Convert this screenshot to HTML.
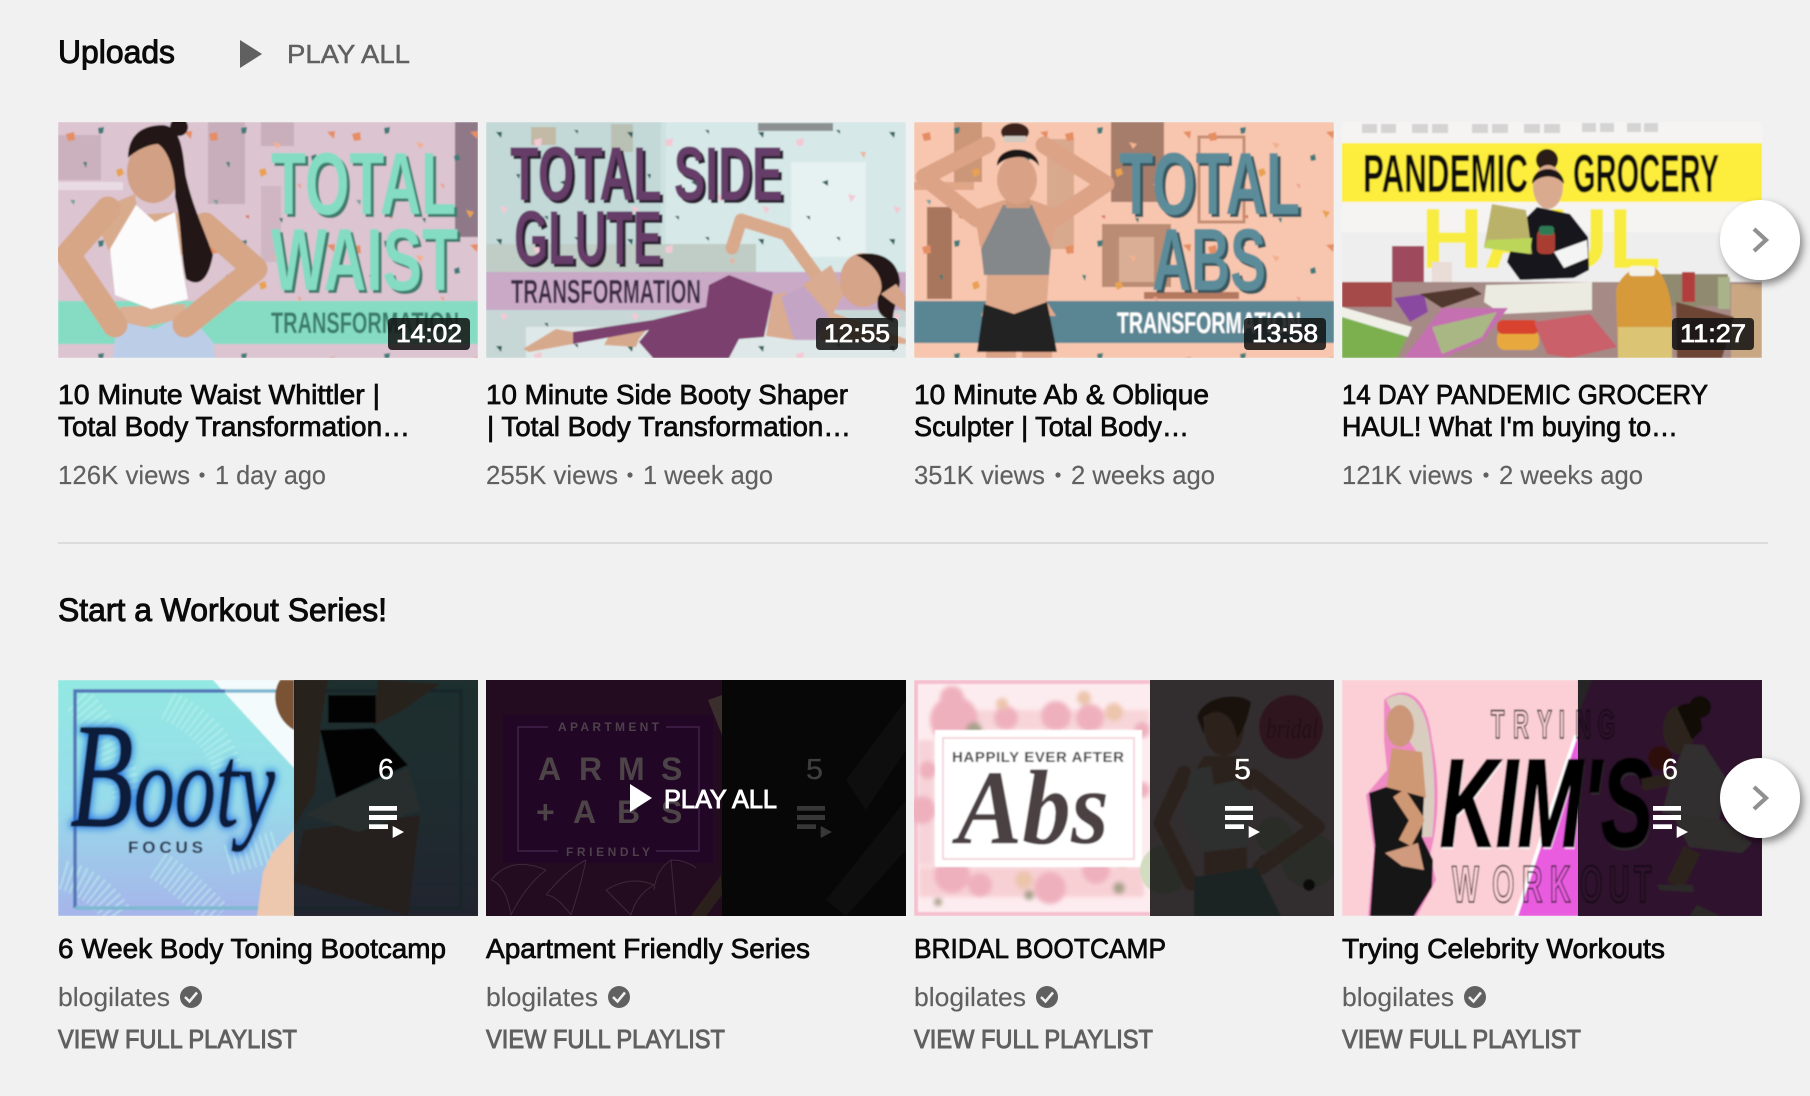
<!DOCTYPE html>
<html><head><meta charset="utf-8"><title>Uploads</title>
<style>
html,body{margin:0;padding:0;background:#f1f1f1;width:1810px;height:1096px;overflow:hidden}
svg{display:block}
text{font-family:"Liberation Sans",sans-serif}
.h{font-size:32px;fill:#0a0a0a;stroke:#0a0a0a;stroke-width:.95px}
.t{font-size:28px;fill:#0a0a0a;stroke:#0a0a0a;stroke-width:.75px}
.m{font-size:26px;fill:#606060;stroke:#606060;stroke-width:.15px}
.p{font-size:26px;fill:#606060;stroke:#606060;stroke-width:.45px}
.v{font-size:26px;fill:#606060;stroke:#606060;stroke-width:.95px}
.d{font-size:25px;fill:#fff;stroke:#fff;stroke-width:.75px}
.c{font-size:29px;fill:#fff;stroke:#fff;stroke-width:.3px}
.b{font-weight:bold}
</style></head><body>
<svg xmlns="http://www.w3.org/2000/svg" width="1810" height="1096" viewBox="0 0 1810 1096">
<defs>
<filter id="soft" x="-5%" y="-5%" width="110%" height="110%"><feGaussianBlur stdDeviation="0.8"/></filter>
<filter id="soft2" x="-10%" y="-10%" width="120%" height="120%"><feGaussianBlur stdDeviation="2.2"/></filter>
<filter id="glow" x="-20%" y="-20%" width="140%" height="140%"><feGaussianBlur stdDeviation="4"/></filter>
<filter id="sh" x="-30%" y="-30%" width="170%" height="170%"><feDropShadow dx="3" dy="4" stdDeviation="4" flood-color="#000" flood-opacity=".45"/></filter>
<pattern id="conf" width="143" height="113" patternUnits="userSpaceOnUse">
<path d="M8 12 L16 10 L17 18 L10 19Z" fill="#e58d63"/>
<path d="M40 6 L46 5 L45 11 L41 12Z" fill="#3f7a78"/>
<path d="M72 20 L80 22 L76 27Z" fill="#f2b090"/>
<path d="M25 40 L29 40 L28 46Z" fill="#3f7a78"/>
<path d="M58 48 L64 46 L66 52 L60 55Z" fill="#e8a24f"/>
<path d="M110 34 L115 32 L116 38 L111 39Z" fill="#3f7a78"/>
<path d="M126 10 L134 9 L133 17Z" fill="#e58d63"/>
<path d="M96 62 L100 62 L100 67Z" fill="#ef9f8e"/>
<path d="M12 78 L17 78 L16 83Z" fill="#6f9ea0"/>
<path d="M44 94 L48 93 L48 97Z" fill="#d76f4e"/>
<path d="M122 88 L130 90 L126 96Z" fill="#e8a24f"/>
<path d="M78 96 L82 96 L81 101Z" fill="#3f7a78"/>
</pattern>
<pattern id="conf2" width="131" height="107" patternUnits="userSpaceOnUse">
<path d="M10 10 L16 10 L15 16Z" fill="#2f5f5c"/>
<path d="M48 18 L56 16 L55 24 L49 24Z" fill="#f3c9d4"/>
<path d="M88 8 L92 8 L92 12Z" fill="#2f5f5c"/>
<path d="M112 30 L118 30 L116 36Z" fill="#e9b39a"/>
<path d="M30 52 L34 52 L33 57Z" fill="#2f5f5c"/>
<path d="M74 60 L80 58 L80 64Z" fill="#2f5f5c"/>
<path d="M100 72 L108 74 L103 80Z" fill="#f3c9d4"/>
<path d="M14 84 L22 86 L18 92Z" fill="#f3c9d4"/>
<path d="M58 94 L62 94 L62 98Z" fill="#2f5f5c"/>
</pattern>
<linearGradient id="tealg" x1="0" y1="0" x2="0" y2="1"><stop offset="0" stop-color="#92e8e2"/><stop offset=".5" stop-color="#97dcea"/><stop offset="1" stop-color="#a6b4ea"/></linearGradient>
</defs>

<rect width="1810" height="1096" fill="#f1f1f1"/>

<!-- Uploads header -->
<text x="58" y="63" class="h" textLength="117" lengthAdjust="spacingAndGlyphs">Uploads</text>
<path d="M240 40 L262 54 L240 68Z" fill="#606060"/>
<text x="287" y="63" class="p" textLength="123" lengthAdjust="spacingAndGlyphs">PLAY ALL</text>

<!-- THUMB 1 -->
<svg x="58" y="122" width="420" height="236" viewBox="0 0 420 236">
<g filter="url(#soft)">
<rect width="420" height="236" fill="#dcc4d0"/>
<rect x="0" y="13" width="43" height="45" fill="#cbb1bd"/>
<rect x="0" y="60" width="65" height="8" fill="#e9dbe2"/>
<rect x="150" y="0" width="37" height="82" fill="#c8aeba"/>
<rect x="203" y="0" width="33" height="24" fill="#c9afbb"/>
<rect x="203" y="64" width="20" height="76" fill="#cfb6c2"/>
<rect x="397" y="0" width="23" height="115" fill="#8f7988"/>
<rect width="420" height="236" fill="url(#conf)"/>
<rect y="179" width="420" height="43" fill="#85dcc3"/>
<text x="216" y="95" font-size="88" class="b" fill="#3f7d6c" textLength="185" lengthAdjust="spacingAndGlyphs">TOTAL</text>
<text x="213" y="92" font-size="88" class="b" fill="#84dcc2" textLength="185" lengthAdjust="spacingAndGlyphs">TOTAL</text>
<text x="216" y="171" font-size="88" class="b" fill="#3f7d6c" textLength="187" lengthAdjust="spacingAndGlyphs">WAIST</text>
<text x="213" y="168" font-size="88" class="b" fill="#84dcc2" textLength="187" lengthAdjust="spacingAndGlyphs">WAIST</text>
<text x="213" y="211" font-size="30" class="b" fill="#3a7a68" textLength="188" lengthAdjust="spacingAndGlyphs">TRANSFORMATION</text>
<path d="M63 200 L97 207 L128 190 L155 220 L157 236 L55 236 L57 217Z" fill="#bccde8"/>
<path d="M62 185 L128 182 L123 197 L87 205 L63 200Z" fill="#dcae92"/>
<path d="M33 90 L77 72 L80 93 L117 90 L147 100 L133 133 L53 133Z" fill="#d9ab8d"/>
<path d="M50 87 L10 133 L57 203" fill="none" stroke="#d6a687" stroke-width="25" stroke-linejoin="round" stroke-linecap="round"/>
<path d="M147 103 L197 147 L127 203" fill="none" stroke="#d6a687" stroke-width="25" stroke-linejoin="round" stroke-linecap="round"/>
<path d="M78 83 L52 127 L57 173 L93 187 L130 177 L125 150 L117 90 L97 100Z" fill="#fbfbfb"/>
<ellipse cx="95" cy="50" rx="26" ry="31" fill="#d2a084"/>
<path d="M70 36 C70 12 85 3 105 3 C125 5 125 35 128 55 C135 85 145 105 155 133 C150 160 140 165 128 157 C122 130 124 100 117 75 C118 50 110 28 100 22 C92 22 78 28 70 36Z" fill="#231713"/>
<circle cx="121" cy="5" r="9" fill="#231713"/>
</g>
</svg>
<rect x="388" y="318" width="82" height="32" rx="4" fill="#111" fill-opacity=".85"/>
<text x="396" y="342" class="d" textLength="66" lengthAdjust="spacingAndGlyphs">14:02</text>

<!-- THUMB 2 -->
<svg x="486" y="122" width="420" height="236" viewBox="0 0 420 236">
<g filter="url(#soft)">
<rect width="420" height="236" fill="#cde2e1"/>
<rect x="0" y="0" width="175" height="130" fill="#c3d9d8"/>
<rect x="180" y="0" width="240" height="150" fill="#d6e8e8"/>
<rect x="305" y="40" width="75" height="95" fill="#e6f1f1"/>
<rect x="45" y="5" width="25" height="18" fill="#c2b9a6"/>
<rect x="125" y="2" width="22" height="28" fill="#b9c0b4"/>
<rect x="272" y="1" width="75" height="8" fill="#8c9090"/>
<rect y="122" x="0" width="270" height="28" fill="#bfcdc6"/>
<rect y="188" width="420" height="48" fill="#c7d7d6"/>
<rect y="205" x="40" width="380" height="31" fill="#dfe8e8"/>
<rect width="420" height="236" fill="url(#conf2)"/>
<rect y="150" width="420" height="38" fill="#c9a9c6"/>
<text x="27" y="81" font-size="76" class="b" fill="#2c2030" textLength="273" lengthAdjust="spacingAndGlyphs">TOTAL SIDE</text>
<text x="24" y="78" font-size="76" class="b" fill="#653d68" textLength="273" lengthAdjust="spacingAndGlyphs">TOTAL SIDE</text>
<text x="31" y="145" font-size="76" class="b" fill="#2c2030" textLength="148" lengthAdjust="spacingAndGlyphs">GLUTE</text>
<text x="28" y="142" font-size="76" class="b" fill="#653d68" textLength="148" lengthAdjust="spacingAndGlyphs">GLUTE</text>
<text x="25" y="181" font-size="33" class="b" fill="#3b2944" textLength="190" lengthAdjust="spacingAndGlyphs">TRANSFORMATION</text>
<path d="M37 227 L70 207 L87 210 L87 222 L43 230Z" fill="#d7a98c"/>
<path d="M118 223 L125 210 L163 205 L153 217 L150 225Z" fill="#d7a98c"/>
<path d="M87 210 L167 198 L220 185 L223 163 L243 153 L287 170 L278 215 L253 217 L243 236 L167 236 L153 220 L163 208 L87 222Z" fill="#7b3f6e"/>
<path d="M287 173 L300 170 L308 218 L280 214Z" fill="#d9ab90"/>
<path d="M317 163 L345 190 L420 217 L420 222 L333 218 L340 197 L315 165Z" fill="#d9ab90"/>
<path d="M295 175 L320 163 L340 187 L343 197 L330 218 L308 218Z" fill="#c4a4c4"/>
<path d="M335 160 L300 112 L255 98 L246 126" fill="none" stroke="#d9a98c" stroke-width="13" stroke-linejoin="round" stroke-linecap="round"/>
<path d="M317 163 L345 143 L358 172 L345 195Z" fill="#d9ab90"/>
<ellipse cx="377" cy="158" rx="23" ry="27" fill="#d6a488"/>
<path d="M370 133 C390 128 412 135 414 160 C410 185 405 195 408 200 C393 195 390 188 392 175 C400 165 395 145 370 133Z" fill="#221815"/>
<path d="M395 172 L410 162 L420 175 L420 190 L405 180Z" fill="#d6a488"/>
</g>
</svg>
<rect x="816" y="318" width="82" height="32" rx="4" fill="#111" fill-opacity=".85"/>
<text x="824" y="342" class="d" textLength="66" lengthAdjust="spacingAndGlyphs">12:55</text>

<!-- THUMB 3 -->
<svg x="914" y="122" width="420" height="236" viewBox="0 0 420 236">
<g filter="url(#soft)">
<rect width="420" height="236" fill="#f8c6af"/>
<rect x="197" y="0" width="53" height="80" fill="#a67d6b"/>
<rect x="188" y="102" width="69" height="63" fill="#b98c73"/>
<rect x="205" y="115" width="35" height="45" fill="#d9ae94"/>
<rect x="40" y="0" width="28" height="60" fill="#cc9678"/>
<rect x="13" y="85" width="25" height="92" fill="#a8765c"/>
<rect x="0" y="60" width="60" height="8" fill="#dfa688"/>
<rect x="133" y="17" width="27" height="110" fill="#d9a98d"/>
<rect x="230" y="170" width="95" height="7" fill="#b4785f"/>
<rect x="285" y="15" width="45" height="85" fill="none" stroke="#c48e72" stroke-width="3"/>
<rect width="420" height="236" fill="url(#conf)"/>
<rect y="179" width="420" height="42" fill="#5a8593"/>
<text x="208" y="95" font-size="88" class="b" fill="#38565f" textLength="181" lengthAdjust="spacingAndGlyphs">TOTAL</text>
<text x="205" y="92" font-size="88" class="b" fill="#5b8c99" textLength="181" lengthAdjust="spacingAndGlyphs">TOTAL</text>
<text x="241" y="171" font-size="88" class="b" fill="#38565f" textLength="114" lengthAdjust="spacingAndGlyphs">ABS</text>
<text x="238" y="168" font-size="88" class="b" fill="#5b8c99" textLength="114" lengthAdjust="spacingAndGlyphs">ABS</text>
<text x="203" y="211" font-size="30" class="b" fill="#fff" textLength="184" lengthAdjust="spacingAndGlyphs">TRANSFORMATION</text>
<path d="M63 97 L10 55 L73 23" fill="none" stroke="#dca386" stroke-width="17" stroke-linejoin="round" stroke-linecap="round"/>
<path d="M140 97 L192 62 L130 23" fill="none" stroke="#dca386" stroke-width="17" stroke-linejoin="round" stroke-linecap="round"/>
<path d="M60 88 L90 78 L118 78 L145 88 L137 125 L66 125Z" fill="#dda386"/>
<path d="M73 153 L135 153 L133 180 L142 194 L67 194 L72 180Z" fill="#dfa98b"/>
<path d="M89 83 L118 83 L137 127 L135 153 L70 153 L67 127Z" fill="#84888a"/>
<path d="M70 182 L100 192 L133 180 L143 230 L63 230Z" fill="#232222"/>
<rect x="72" y="230" width="30" height="6" fill="#dca386"/><rect x="108" y="230" width="30" height="6" fill="#dca386"/>
<rect x="92" y="72" width="24" height="14" fill="#d09a7e"/>
<ellipse cx="103" cy="58" rx="20" ry="24" fill="#d9a286"/>
<path d="M83 44 C82 22 124 22 125 44 C118 32 92 32 83 44Z" fill="#1f1613"/>
<ellipse cx="101" cy="10" rx="14" ry="9" fill="#3a241c"/>
<rect x="90" y="14" width="22" height="6" fill="#cfc9c0"/>
</g>
</svg>
<rect x="1244" y="318" width="82" height="32" rx="4" fill="#111" fill-opacity=".85"/>
<text x="1252" y="342" class="d" textLength="66" lengthAdjust="spacingAndGlyphs">13:58</text>

<!-- THUMB 4 -->
<svg x="1342" y="122" width="420" height="236" viewBox="0 0 420 236">
<g filter="url(#soft)">
<rect width="420" height="236" fill="#f6f4f3"/>
<g fill="#d4d4d4"><rect x="20" y="2" width="15" height="9"/><rect x="39" y="2" width="15" height="9"/><rect x="70" y="2" width="16" height="9"/><rect x="90" y="2" width="16" height="9"/><rect x="130" y="2" width="16" height="9"/><rect x="150" y="2" width="16" height="9"/><rect x="182" y="2" width="16" height="9"/><rect x="202" y="2" width="16" height="9"/><rect x="240" y="1" width="14" height="9"/><rect x="258" y="1" width="14" height="9"/><rect x="285" y="1" width="14" height="9"/><rect x="302" y="1" width="14" height="9"/></g>
<rect y="21" width="420" height="59" fill="#fdee3c"/>
<rect x="0" y="110" width="420" height="50" fill="#efeeee"/>
<text x="21" y="70" font-size="54" class="b" fill="#0c0c0c" textLength="165" lengthAdjust="spacingAndGlyphs">PANDEMIC</text>
<text x="231" y="70" font-size="54" class="b" fill="#0c0c0c" textLength="146" lengthAdjust="spacingAndGlyphs">GROCERY</text>
<text x="79" y="146" font-size="85" class="b" fill="#f8ec41" textLength="240" lengthAdjust="spacingAndGlyphs">HAUL</text>
<path d="M195 85 L228 92 L246 115 L247 148 L232 156 L178 158 L165 140 L176 104Z" fill="#17161a"/>
<circle cx="205" cy="38" r="11" fill="#2a1a14"/>
<ellipse cx="206" cy="65" rx="15" ry="22" fill="#d9aa8e"/>
<path d="M190 62 C190 42 222 42 222 62 C214 52 198 52 190 62Z" fill="#1d1512"/>
<path d="M150 82 L184 88 L190 132 L142 125Z" fill="#bbb26a"/>
<path d="M145 118 L190 116 L188 132 L142 126Z" fill="#bcd65a"/>
<rect x="195" y="108" width="18" height="24" rx="5" fill="#a93c30"/>
<rect x="197" y="104" width="15" height="9" rx="3" fill="#2f7a55"/>
<path d="M212 130 L245 118 L246 136 L222 146Z" fill="#f4f4f4"/>
<rect x="50" y="124" width="32" height="44" fill="#9e4a5b"/>
<rect x="90" y="140" width="20" height="25" fill="#eadcd6"/>
<rect x="0" y="160" width="420" height="76" fill="#a58a86"/>
<rect x="0" y="160" width="50" height="25" fill="#a54a4a"/>
<rect x="318" y="152" width="68" height="32" fill="#8f8a70"/>
<rect x="340" y="150" width="13" height="30" fill="#b23d3d"/>
<rect x="376" y="155" width="12" height="32" fill="#a9b38a"/>
<rect x="389" y="162" width="31" height="74" fill="#c9a783"/>
<path d="M144 163 L250 160 L250 188 L160 192 L142 180Z" fill="#ecebe1"/>
<path d="M0 185 L70 205 L55 236 L0 236Z" fill="#7bb04f"/>
<path d="M0 185 L70 205 L66 215 L0 195Z" fill="#f0efe8"/>
<path d="M52 176 L82 172 L86 190 L68 200Z" fill="#8a4aa0"/>
<path d="M62 236 L100 186 L166 186 L140 220 L100 236Z" fill="#c56fb0"/>
<path d="M90 205 L155 190 L140 215 L100 232Z" fill="#a8b784"/>
<path d="M78 172 L130 165 L140 172 L100 186Z" fill="#51372f"/>
<rect x="155" y="208" width="42" height="20" rx="8" fill="#e7a93c"/>
<rect x="155" y="198" width="42" height="14" rx="6" fill="#d8432e"/>
<path d="M192 200 L248 192 L275 225 L228 236 L205 232Z" fill="#c9606a"/>
<path d="M274 170 C276 155 288 150 292 145 L312 145 C320 150 328 165 330 190 L330 236 L276 236Z" fill="#d79a3b"/>
<rect x="287" y="144" width="26" height="10" rx="3" fill="#f3f1e8"/>
<rect x="276" y="205" width="54" height="31" fill="#dcc475"/>
<path d="M334 180 L392 195 L380 236 L335 236Z" fill="#6d4535"/>
</g>
</svg>
<rect x="1672" y="318" width="82" height="32" rx="4" fill="#111" fill-opacity=".85"/>
<text x="1680" y="342" class="d" textLength="66" lengthAdjust="spacingAndGlyphs">11:27</text>

<!-- Arrow 1 -->
<circle cx="1760" cy="240" r="40" fill="#fff" filter="url(#sh)"/>
<path d="M1754 229 L1766 240 L1754 251" fill="none" stroke="#909090" stroke-width="4.2"/>

<!-- Row 1 text -->
<text x="58" y="404" class="t" textLength="322" lengthAdjust="spacingAndGlyphs">10 Minute Waist Whittler |</text>
<text x="58" y="436" class="t" textLength="352" lengthAdjust="spacingAndGlyphs">Total Body Transformation…</text>
<text x="58" y="484" class="m" textLength="132" lengthAdjust="spacingAndGlyphs">126K views</text><circle cx="202" cy="475" r="2.6" fill="#606060"/><text x="215" y="484" class="m" textLength="111" lengthAdjust="spacingAndGlyphs">1 day ago</text>
<text x="486" y="404" class="t" textLength="362" lengthAdjust="spacingAndGlyphs">10 Minute Side Booty Shaper</text>
<text x="487" y="436" class="t" textLength="364" lengthAdjust="spacingAndGlyphs">| Total Body Transformation…</text>
<text x="486" y="484" class="m" textLength="132" lengthAdjust="spacingAndGlyphs">255K views</text><circle cx="630" cy="475" r="2.6" fill="#606060"/><text x="643" y="484" class="m" textLength="130" lengthAdjust="spacingAndGlyphs">1 week ago</text>
<text x="914" y="404" class="t" textLength="295" lengthAdjust="spacingAndGlyphs">10 Minute Ab &amp; Oblique</text>
<text x="914" y="436" class="t" textLength="275" lengthAdjust="spacingAndGlyphs">Sculpter | Total Body…</text>
<text x="914" y="484" class="m" textLength="131" lengthAdjust="spacingAndGlyphs">351K views</text><circle cx="1058" cy="475" r="2.6" fill="#606060"/><text x="1071" y="484" class="m" textLength="144" lengthAdjust="spacingAndGlyphs">2 weeks ago</text>
<text x="1342" y="404" class="t" textLength="366" lengthAdjust="spacingAndGlyphs">14 DAY PANDEMIC GROCERY</text>
<text x="1342" y="436" class="t" textLength="336" lengthAdjust="spacingAndGlyphs">HAUL! What I'm buying to…</text>
<text x="1342" y="484" class="m" textLength="131" lengthAdjust="spacingAndGlyphs">121K views</text><circle cx="1486" cy="475" r="2.6" fill="#606060"/><text x="1499" y="484" class="m" textLength="144" lengthAdjust="spacingAndGlyphs">2 weeks ago</text>

<rect x="58" y="542" width="1710" height="2" fill="#dcdcdc"/>

<text x="58" y="621" class="h" textLength="329" lengthAdjust="spacingAndGlyphs">Start a Workout Series!</text>

<!-- PLAYLIST 1 -->
<svg x="58" y="680" width="420" height="236" viewBox="0 0 420 236">
<g filter="url(#soft)">
<rect width="420" height="236" fill="url(#tealg)"/>
<path d="M155 0 L236 0 L236 88Z" fill="#f4fbfc"/>
<g fill="none" stroke="#bdf3ec" stroke-width="30" stroke-dasharray="2 4" opacity=".55"><path d="M20 20 Q60 60 70 120"/><path d="M110 25 Q160 50 170 90"/><path d="M100 185 Q130 205 160 236"/><path d="M5 195 Q40 205 60 236"/><path d="M170 180 L220 165"/></g>
<path d="M17 228 L17 11 L167 11" fill="none" stroke="#5577b8" stroke-width="3.5"/>
<path d="M17 228 L403 228 L403 11 L167 11" fill="none" stroke="#7cb8d0" stroke-width="3.5"/>
<text x="12" y="146" font-size="118" fill="#1767e0" stroke="#1767e0" stroke-width="3" font-style="italic" filter="url(#glow)" textLength="205" lengthAdjust="spacingAndGlyphs" style="font-family:'Liberation Serif',serif"><tspan font-size="150">B</tspan>ooty</text>
<text x="12" y="146" font-size="118" font-style="italic" fill="#0a1a3a" stroke="#0a1a3a" stroke-width="1" textLength="205" lengthAdjust="spacingAndGlyphs" style="font-family:'Liberation Serif',serif"><tspan font-size="150">B</tspan>ooty</text>
<text x="70" y="173" font-size="17" class="b" fill="#1e2740" textLength="75" lengthAdjust="spacing">FOCUS</text>
<path d="M199 236 L205 192 L215 172 L236 150 L236 236Z" fill="#edc7ae"/>
<path d="M222 0 C212 15 218 40 236 50 L236 0Z" fill="#7a5236"/>
<path d="M236 0 L270 0 L263 43 L257 113 L236 147Z" fill="#c9a892"/>
<path d="M320 0 L382 4 L342 32 L315 46Z" fill="#c9a892"/>
<path d="M245 150 L362 135 L350 236 L236 202Z" fill="#b8a090"/>
<rect x="270" y="15" width="48" height="28" fill="#111"/>
<path d="M262 50 L316 48 L350 85 L278 118Z" fill="#0e0e0e"/>
<path d="M278 118 L350 88 L362 130 L300 152 L248 135Z" fill="#c4e6e0"/>
</g>
<rect x="236" width="184" height="236" fill="#000" fill-opacity=".8"/>
<text x="320" y="99" class="c" textLength="16" lengthAdjust="spacingAndGlyphs">6</text>
<g fill="#fff"><rect x="311" y="126" width="28" height="4.7"/><rect x="311" y="135" width="28" height="5"/><rect x="311" y="144.3" width="19" height="4.7"/><path d="M334.7 146 L346 152 L334.7 158Z"/></g>
</svg>

<!-- PLAYLIST 2 -->
<svg x="486" y="680" width="420" height="236" viewBox="0 0 420 236">
<rect width="236" height="236" fill="#230c1f"/>
<rect x="236" width="184" height="236" fill="#070707"/>
<path d="M222 20 L236 15 L236 55Z" fill="#3a2f2c"/>
<g fill="#0e0e0e"><path d="M420 20 L360 100 L380 130 L420 70Z"/><path d="M420 120 L340 220 L360 236 L420 170Z"/></g>
<rect x="17" y="35" width="210" height="148" fill="#210625"/>
<rect x="32" y="47" width="181" height="124" fill="none" stroke="#43204a" stroke-width="1.5"/>
<rect x="62" y="40" width="118" height="14" fill="#210625"/>
<rect x="72" y="164" width="98" height="14" fill="#210625"/>
<text x="72" y="51" font-size="12" class="b" fill="#4e414a" textLength="101" lengthAdjust="spacing">APARTMENT</text>
<text y="100" font-size="32" class="b" fill="#4d4448" x="52 93 132 175">ARMS</text>
<text y="143" font-size="32" class="b" fill="#4d4448" x="50 87 131 175">+ABS</text>
<text x="80" y="176" font-size="12" class="b" fill="#4e414a" textLength="84" lengthAdjust="spacing">FRIENDLY</text>
<g fill="none" stroke="#3c2a38" stroke-width="1"><path d="M5 200 Q25 175 60 190 M25 235 Q20 205 5 200 M25 235 Q40 205 60 190 M60 215 Q80 190 100 180 M85 235 Q95 205 100 180 M85 235 Q70 215 60 215 M120 210 Q145 195 168 205 M145 235 Q150 215 168 205 M145 235 Q130 220 120 210 M190 235 L185 180 M185 180 Q200 180 210 188 M185 180 Q170 190 168 210"/></g>
<path d="M205 236 L235 195 L236 215 L220 236Z" fill="#2b201c"/>
<text x="320" y="99" class="c" style="fill:#3e3e3e;stroke:#3e3e3e" textLength="17" lengthAdjust="spacingAndGlyphs">5</text>
<g fill="#373737"><rect x="311" y="126" width="28" height="4.7"/><rect x="311" y="135" width="28" height="5"/><rect x="311" y="144.3" width="19" height="4.7"/><path d="M334.7 146 L346 152 L334.7 158Z"/></g>
<path d="M144 104 L166 118 L144 132Z" fill="#fff"/>
<text x="178" y="128" font-size="26" fill="#fff" stroke="#fff" stroke-width=".95" textLength="113" lengthAdjust="spacingAndGlyphs">PLAY ALL</text>
</svg>

<!-- PLAYLIST 3 -->
<svg x="914" y="680" width="420" height="236" viewBox="0 0 420 236">
<g filter="url(#soft)">
<rect width="420" height="236" fill="#fdecef"/>
<rect x="0" y="0" width="420" height="4" fill="#f5bfd0"/><rect x="0" y="232" width="420" height="4" fill="#f5bfd0"/><rect width="4" height="236" fill="#f5bfd0"/>
<g filter="url(#soft2)">
<rect x="60" y="30" width="175" height="20" fill="#f7d5d8"/>
<rect x="5" y="187" width="225" height="30" fill="#f7d0d4"/>
<rect x="4" y="60" width="16" height="125" fill="#f6d3d8"/>
<g fill="#efb0be"><circle cx="40" cy="40" r="24"/><circle cx="38" cy="18" r="12"/><circle cx="92" cy="38" r="12"/><circle cx="142" cy="36" r="15"/><circle cx="176" cy="38" r="14"/><circle cx="8" cy="130" r="14"/><circle cx="14" cy="90" r="9"/><circle cx="38" cy="195" r="18"/><circle cx="66" cy="205" r="12"/><circle cx="136" cy="208" r="16"/><circle cx="182" cy="190" r="14"/><circle cx="228" cy="110" r="8"/><circle cx="228" cy="50" r="8"/></g>
<g fill="#ecc5ac"><circle cx="88" cy="24" r="6"/><circle cx="200" cy="32" r="9"/><circle cx="170" cy="18" r="7"/><circle cx="208" cy="178" r="9"/><circle cx="110" cy="200" r="9"/></g>
<g fill="#a8a28c"><circle cx="60" cy="50" r="8"/><circle cx="115" cy="215" r="5"/><circle cx="205" cy="208" r="6"/><circle cx="24" cy="222" r="4"/></g>
</g>
<rect x="21" y="50" width="207" height="137" fill="#fff"/>
<rect x="29" y="58" width="191" height="121" fill="none" stroke="#f4d6dd" stroke-width="2"/>
<text x="38" y="82" font-size="15" class="b" fill="#3e3a3c" textLength="172" lengthAdjust="spacing">HAPPILY EVER AFTER</text>
<text x="43" y="163" font-size="106" font-weight="bold" font-style="italic" fill="#4c4043" textLength="152" lengthAdjust="spacingAndGlyphs" style="font-family:'Liberation Serif',serif">Abs</text>
<rect x="236" width="184" height="236" fill="#fae2e6"/>
<circle cx="377" cy="47" r="32" fill="#e96a96"/>
<text x="352" y="58" font-size="28" font-style="italic" fill="#a94a6a" textLength="52" lengthAdjust="spacingAndGlyphs" style="font-family:'Liberation Serif',serif">bridal</text>
<g fill="#d2dcc0"><circle cx="395" cy="180" r="28"/><circle cx="360" cy="155" r="18"/><circle cx="250" cy="190" r="24"/></g>
<g fill="#3a3a30"><circle cx="395" cy="205" r="6"/><circle cx="350" cy="180" r="5"/></g>
<path d="M270 93 L247 143 L277 203" fill="none" stroke="#dcab90" stroke-width="15" stroke-linejoin="round" stroke-linecap="round"/>
<path d="M340 97 L403 147 L347 187" fill="none" stroke="#dcab90" stroke-width="16" stroke-linejoin="round" stroke-linecap="round"/>
<path d="M290 76 L325 76 L340 110 L270 110Z" fill="#dcab90"/>
<path d="M277 90 L297 86 L300 105 L323 100 L337 113 L333 167 L290 173 L267 133Z" fill="#e3ece9"/>
<path d="M290 172 L333 167 L333 190 L290 195Z" fill="#dcab90"/>
<path d="M280 197 L343 187 L367 236 L280 236Z" fill="#8ab4ae"/>
<ellipse cx="310" cy="47" rx="20" ry="29" fill="#d9a386"/>
<path d="M283 37 C290 15 325 12 337 22 C335 35 330 50 323 58 C320 35 305 25 290 37 L290 55Z" fill="#7c5a3e"/>
</g>
<rect x="236" width="184" height="236" fill="#000" fill-opacity=".8"/>
<text x="320" y="99" class="c" textLength="17" lengthAdjust="spacingAndGlyphs">5</text>
<g fill="#fff"><rect x="311" y="126" width="28" height="4.7"/><rect x="311" y="135" width="28" height="5"/><rect x="311" y="144.3" width="19" height="4.7"/><path d="M334.7 146 L346 152 L334.7 158Z"/></g>
</svg>

<!-- PLAYLIST 4 -->
<svg x="1342" y="680" width="420" height="236" viewBox="0 0 420 236">
<g filter="url(#soft)">
<rect width="420" height="236" fill="#fbcfd5"/>
<path d="M236 55 L236 0 L420 0 L420 236 L176 236Z" fill="#e95bdf"/>
<path d="M236 55 L176 236 L172 236 L232 55Z" fill="#fff"/>
<path d="M236 0 L250 0 L238 30 L236 36Z" fill="#bfb5b5"/>
<g transform="translate(0,58) scale(.55,1)" font-size="40" font-weight="bold" fill="none" stroke="#222" stroke-width="1.6"><text x="271 311 355 394 424 465" y="0">TRYING</text></g>
<text x="99" y="169" font-size="124" font-style="italic" class="b" fill="#fff" textLength="213" lengthAdjust="spacingAndGlyphs" opacity=".8">KIM'S</text>
<text x="98" y="166" font-size="124" font-style="italic" class="b" fill="#050505" stroke="#050505" stroke-width="2.5" textLength="213" lengthAdjust="spacingAndGlyphs">KIM'S</text>
<g transform="translate(0,222) scale(.55,1)" font-size="52" font-weight="bold" fill="none" stroke="#222" stroke-width="1.6"><text x="200 273 327 378 433 485 531" y="0">WORKOUT</text></g>
<path d="M42 20 C60 5 85 10 90 60 C100 110 95 150 88 175 L94 200 L75 236 L26 236 L32 170 L24 115 L45 90 L42 60Z" fill="#f08ac4"/>
<path d="M44 20 C60 8 82 14 88 60 C95 105 92 140 90 157 L78 157 L80 80 L60 50Z" fill="#d9cdbf"/>
<ellipse cx="58" cy="46" rx="14" ry="21" fill="#cb9778"/>
<path d="M50 68 L80 72 L84 118 L44 110Z" fill="#cf9874"/>
<path d="M27 113 L44 107 L82 117 L80 157 L91 180 L90 207 L72 236 L28 236 L33 165Z" fill="#151315"/>
<path d="M57 113 L75 140 L63 163" fill="none" stroke="#cf9874" stroke-width="14" stroke-linejoin="round"/>
<path d="M43 173 L76 163 L82 190 L60 186Z" fill="#cf9a7d"/>
<path d="M363 90 L325 100 L300 105" fill="none" stroke="#d9a98c" stroke-width="12"/>
<ellipse cx="337" cy="50" rx="16" ry="24" fill="#e0b090"/>
<circle cx="358" cy="27" r="11" fill="#5a3c28"/>
<path d="M335 28 C345 18 360 25 360 50 L350 60Z" fill="#5a3c28"/>
<path d="M343 64 L362 65 L385 100 L377 140 L320 133 L330 95Z" fill="#f4ece8"/>
<circle cx="318" cy="78" r="12" fill="#e24a3a"/>
<path d="M380 140 L410 163 L400 173 L347 167 L330 133Z" fill="#eee4de"/>
<path d="M350 170 L333 205" fill="none" stroke="#e0b090" stroke-width="18"/>
<path d="M315 205 L350 205 L352 212 L318 210Z" fill="#d8d3cc"/>
<path d="M355 225 L378 236 L348 236Z" fill="#d8d3cc"/>
</g>
<rect x="236" width="184" height="236" fill="#000" fill-opacity=".8"/>
<text x="320" y="99" class="c" textLength="16" lengthAdjust="spacingAndGlyphs">6</text>
<g fill="#fff"><rect x="311" y="126" width="28" height="4.7"/><rect x="311" y="135" width="28" height="5"/><rect x="311" y="144.3" width="19" height="4.7"/><path d="M334.7 146 L346 152 L334.7 158Z"/></g>
</svg>

<!-- Arrow 2 -->
<circle cx="1760" cy="798" r="40" fill="#fff" filter="url(#sh)"/>
<path d="M1754 787 L1766 798 L1754 809" fill="none" stroke="#909090" stroke-width="4.2"/>

<!-- Row 2 text -->
<text x="58" y="958" class="t" textLength="388" lengthAdjust="spacingAndGlyphs">6 Week Body Toning Bootcamp</text>
<text x="486" y="958" class="t" textLength="324" lengthAdjust="spacingAndGlyphs">Apartment Friendly Series</text>
<text x="914" y="958" class="t" textLength="252" lengthAdjust="spacingAndGlyphs">BRIDAL BOOTCAMP</text>
<text x="1342" y="958" class="t" textLength="323" lengthAdjust="spacingAndGlyphs">Trying Celebrity Workouts</text>

<text x="58" y="1006" class="m" textLength="112" lengthAdjust="spacingAndGlyphs">blogilates</text>
<text x="486" y="1006" class="m" textLength="112" lengthAdjust="spacingAndGlyphs">blogilates</text>
<text x="914" y="1006" class="m" textLength="112" lengthAdjust="spacingAndGlyphs">blogilates</text>
<text x="1342" y="1006" class="m" textLength="112" lengthAdjust="spacingAndGlyphs">blogilates</text>

<g id="badges">
<circle cx="191" cy="997" r="11" fill="#606060"/><path d="M185 997 L189.5 1001.5 L197 992.5" fill="none" stroke="#f1f1f1" stroke-width="2.6"/>
<circle cx="619" cy="997" r="11" fill="#606060"/><path d="M613 997 L617.5 1001.5 L625 992.5" fill="none" stroke="#f1f1f1" stroke-width="2.6"/>
<circle cx="1047" cy="997" r="11" fill="#606060"/><path d="M1041 997 L1045.5 1001.5 L1053 992.5" fill="none" stroke="#f1f1f1" stroke-width="2.6"/>
<circle cx="1475" cy="997" r="11" fill="#606060"/><path d="M1469 997 L1473.5 1001.5 L1481 992.5" fill="none" stroke="#f1f1f1" stroke-width="2.6"/>
</g>

<text x="58" y="1048" class="v" textLength="239" lengthAdjust="spacingAndGlyphs">VIEW FULL PLAYLIST</text>
<text x="486" y="1048" class="v" textLength="239" lengthAdjust="spacingAndGlyphs">VIEW FULL PLAYLIST</text>
<text x="914" y="1048" class="v" textLength="239" lengthAdjust="spacingAndGlyphs">VIEW FULL PLAYLIST</text>
<text x="1342" y="1048" class="v" textLength="239" lengthAdjust="spacingAndGlyphs">VIEW FULL PLAYLIST</text>
</svg>
</body></html>
